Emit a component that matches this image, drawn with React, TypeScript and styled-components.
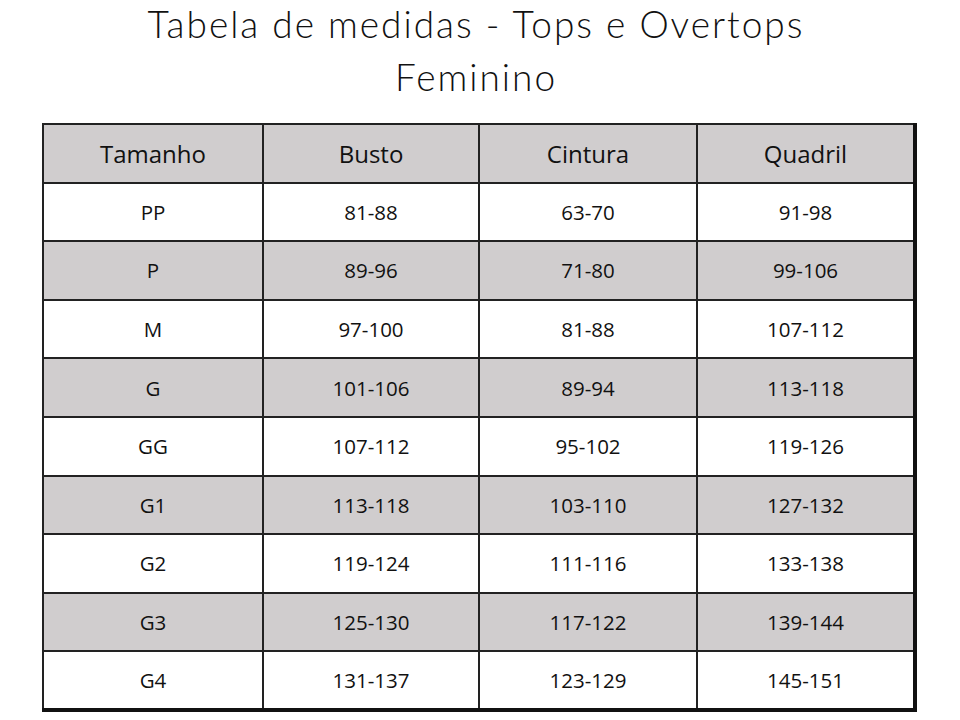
import React from 'react';
import styled, { createGlobalStyle } from 'styled-components';

const ROWS = [
  { size: 'PP', busto: '81-88', cintura: '63-70', quadril: '91-98' },
  { size: 'P', busto: '89-96', cintura: '71-80', quadril: '99-106' },
  { size: 'M', busto: '97-100', cintura: '81-88', quadril: '107-112' },
  { size: 'G', busto: '101-106', cintura: '89-94', quadril: '113-118' },
  { size: 'GG', busto: '107-112', cintura: '95-102', quadril: '119-126' },
  { size: 'G1', busto: '113-118', cintura: '103-110', quadril: '127-132' },
  { size: 'G2', busto: '119-124', cintura: '111-116', quadril: '133-138' },
  { size: 'G3', busto: '125-130', cintura: '117-122', quadril: '139-144' },
  { size: 'G4', busto: '131-137', cintura: '123-129', quadril: '145-151' },
];

const GlobalStyle = createGlobalStyle`
  html, body {
    margin: 0;
    background: #fff;
  }
`;

const Page = styled.div`
  width: 960px;
  height: 720px;
  overflow: hidden;
  background: #fff;
`;

const Title = styled.h1`
  margin: -3px 8px 0 0;
  font-family: 'Lato', 'Liberation Sans', sans-serif;
  font-weight: 300;
  font-size: 37px;
  letter-spacing: 2px;
  line-height: 53px;
  color: #111;
  text-align: center;
`;

const Table = styled.table`
  margin: 20px 0 0 42px;
  width: 872px;
  border-collapse: collapse;
  table-layout: fixed;
  border-top: 2px solid #111;
  border-left: 2px solid #111;
  border-right: 4px solid #111;
  border-bottom: 4px solid #111;
  font-family: 'Open Sans', 'Liberation Sans', sans-serif;
  color: #111;
`;

const Row = styled.tr<{ shaded?: boolean }>`
  height: 58.6px;
  background: ${(p) => (p.shaded ? '#d0cdce' : '#fff')};
`;

const HeadCell = styled.th`
  font-size: 24px;
  font-weight: 400;
  text-align: center;
  border: 2px solid #222;
  padding: 0;
`;

const Cell = styled.td`
  font-size: 20.5px;
  text-align: center;
  border: 2px solid #222;
  padding: 0;
`;

const App = () => {
  return (
    <Page>
      <GlobalStyle />
      <Title>
        Tabela de medidas - Tops e Overtops
        <br />
        Feminino
      </Title>
      <Table>
        <colgroup>
          <col style={{ width: 220 }} />
          <col style={{ width: 216 }} />
          <col style={{ width: 218 }} />
          <col style={{ width: 218 }} />
        </colgroup>
        <thead>
          <Row shaded>
            <HeadCell>Tamanho</HeadCell>
            <HeadCell>Busto</HeadCell>
            <HeadCell>Cintura</HeadCell>
            <HeadCell>Quadril</HeadCell>
          </Row>
        </thead>
        <tbody>
          {ROWS.map((r, i) => (
            <Row key={r.size} shaded={i % 2 === 1}>
              <Cell>{r.size}</Cell>
              <Cell>{r.busto}</Cell>
              <Cell>{r.cintura}</Cell>
              <Cell>{r.quadril}</Cell>
            </Row>
          ))}
        </tbody>
      </Table>
    </Page>
  );
};

export default App;
